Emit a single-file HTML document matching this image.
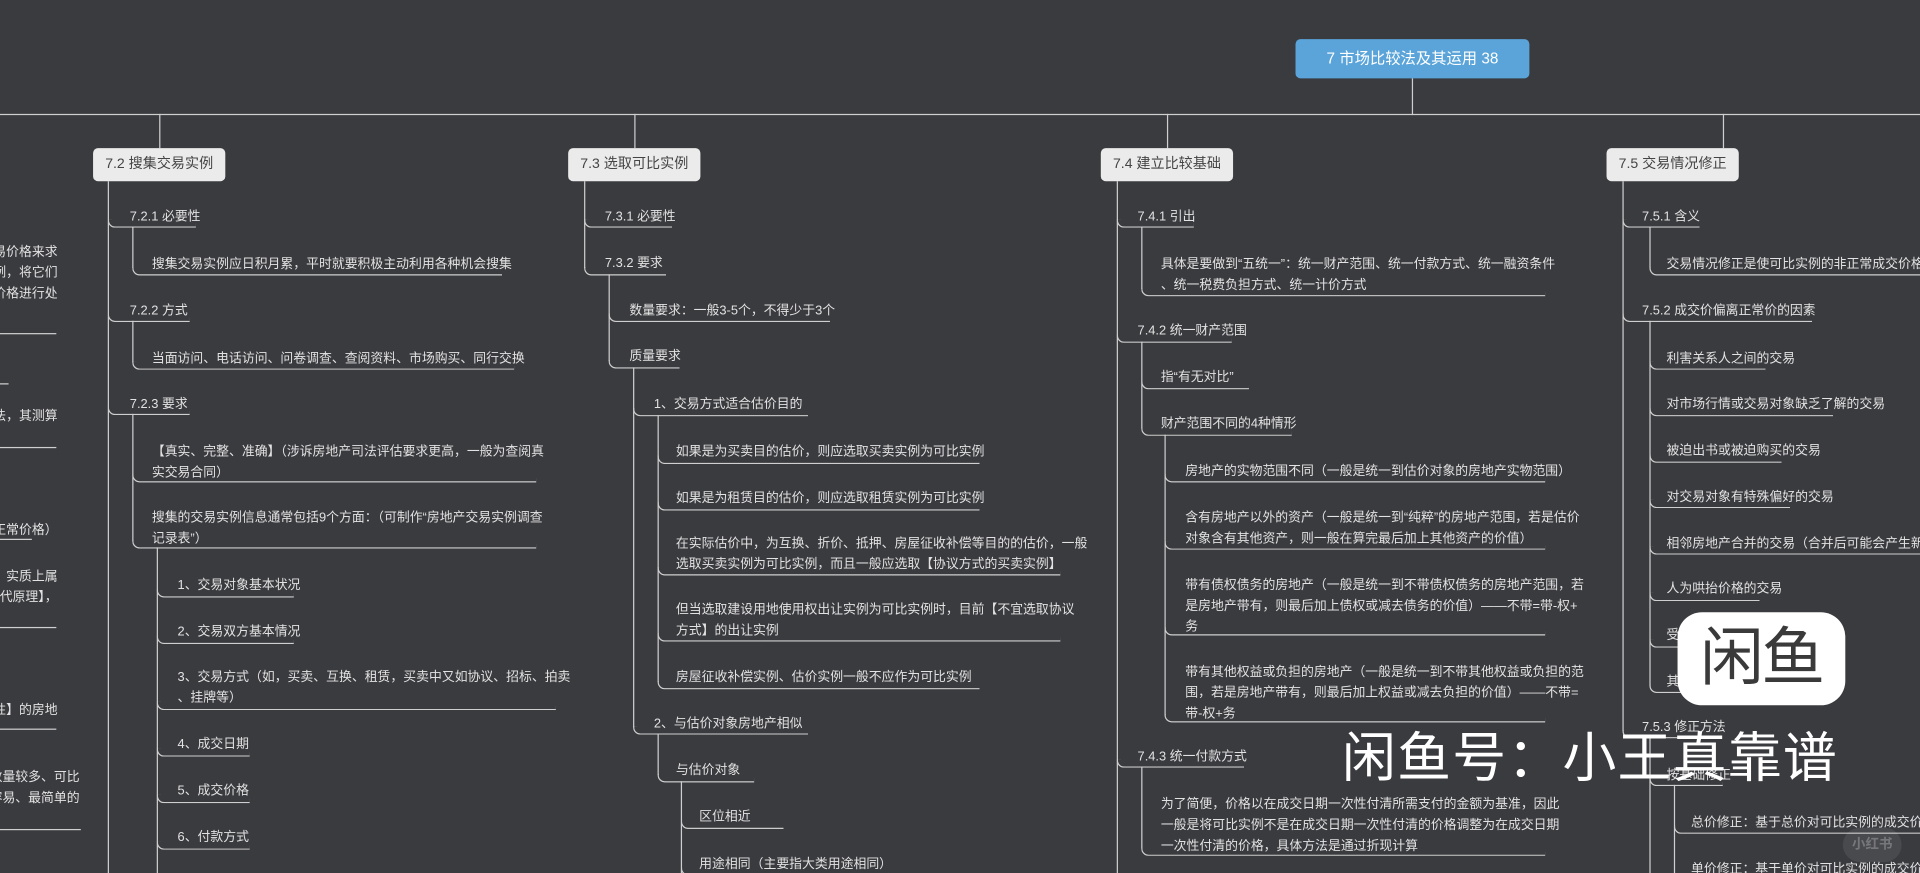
<!DOCTYPE html>
<html><head><meta charset="utf-8"><style>
html,body{margin:0;padding:0;background:#3a3b3f;overflow:hidden}
#s{position:absolute;left:0;top:0;width:1568px;height:713px;transform:scale(1.22449);transform-origin:0 0;font-family:"Liberation Sans","Noto Sans CJK SC",sans-serif;background:#3a3b3f;overflow:hidden}
.t{position:absolute;font-size:10.5px;line-height:17px;color:#e2e2e2;white-space:nowrap;margin-top:1.5px}
.u{position:absolute;height:7px;border-left:1.3px solid #cfcfcf;border-bottom:1.3px solid #cfcfcf;border-bottom-left-radius:6px;box-sizing:border-box}
.v{position:absolute;width:1.3px;background:#cfcfcf}
.h{position:absolute;height:1.3px;background:#cfcfcf}
.b{position:absolute;height:27px;line-height:27px;background:#ebebeb;border-radius:4px;color:#444;font-size:11.5px;text-align:center}
.r{position:absolute;text-align:right;width:247px;left:-200px}
</style></head><body><div id="s">
<!-- main -->
<div class="h" style="left:0;top:93px;width:1568px"></div>
<div class="b" style="left:1058px;top:32px;width:191px;height:32px;line-height:32px;background:#5aa4da;color:#fff;font-size:12.5px">7 市场比较法及其运用 38</div>
<div class="v" style="left:1153px;top:64px;height:30px"></div>
<div class="v" style="left:130px;top:93px;height:28px"></div>
<div class="v" style="left:518px;top:93px;height:28px"></div>
<div class="v" style="left:953px;top:93px;height:28px"></div>
<div class="v" style="left:1407px;top:93px;height:28px"></div>
<div class="b" style="left:76px;top:121px;width:108px">7.2 搜集交易实例</div>
<div class="b" style="left:464px;top:121px;width:108px">7.3 选取可比实例</div>
<div class="b" style="left:899px;top:121px;width:108px">7.4 建立比较基础</div>
<div class="b" style="left:1312px;top:121px;width:108px">7.5 交易情况修正</div>

<!-- left partial -->
<div class="t r" style="top:196px">交易价格来求<br>实例，将它们<br>交价格进行处</div>
<div class="h" style="left:0;top:272px;width:46px"></div>
<div class="h" style="left:0;top:313px;width:7px"></div>
<div class="t r" style="top:330px">用法，其测算</div>
<div class="h" style="left:0;top:365px;width:46px"></div>
<div class="t r" style="top:423px">正常价格）</div>
<div class="h" style="left:0;top:440px;width:26px"></div>
<div class="t r" style="top:461px">法，实质上属<br>【替代原理】，</div>
<div class="h" style="left:0;top:512px;width:46px"></div>
<div class="t r" style="top:570px">【相同性】的房地</div>
<div class="h" style="left:0;top:595px;width:46px"></div>
<div class="t" style="left:-30px;top:625px;text-align:right;width:95px">交易数量较多、可比<br>比较容易、最简单的</div>
<div class="h" style="left:0;top:677px;width:66px"></div>

<!-- 7.2 -->
<div class="v" style="left:88px;top:148px;height:565px"></div>
<div class="t" style="left:106px;top:167px">7.2.1 必要性</div><div class="u" style="left:88px;top:179px;width:72px"></div>
<div class="v" style="left:108px;top:185px;height:34px"></div>
<div class="t" style="left:124px;top:206px">搜集交易实例应日积月累，平时就要积极主动利用各种机会搜集</div><div class="u" style="left:108px;top:218px;width:302px"></div>
<div class="t" style="left:106px;top:244px">7.2.2 方式</div><div class="u" style="left:88px;top:256px;width:67px"></div>
<div class="v" style="left:108px;top:262px;height:34px"></div>
<div class="t" style="left:124px;top:283px">当面访问、电话访问、问卷调查、查阅资料、市场购买、同行交换</div><div class="u" style="left:108px;top:295px;width:312px"></div>
<div class="t" style="left:106px;top:320px">7.2.3 要求</div><div class="u" style="left:88px;top:332px;width:67px"></div>
<div class="v" style="left:108px;top:338px;height:104px"></div>
<div class="t" style="left:124px;top:359px">【真实、完整、准确】（涉诉房地产司法评估要求更高，一般为查阅真<br>实交易合同）</div><div class="u" style="left:108px;top:387px;width:330px"></div>
<div class="t" style="left:124px;top:413px">搜集的交易实例信息通常包括9个方面：（可制作“房地产交易实例调查<br>记录表”）</div><div class="u" style="left:108px;top:441px;width:330px"></div>
<div class="v" style="left:128px;top:447px;height:266px"></div>
<div class="t" style="left:145px;top:468px">1、交易对象基本状况</div><div class="u" style="left:128px;top:481px;width:112px"></div>
<div class="t" style="left:145px;top:506px">2、交易双方基本情况</div><div class="u" style="left:128px;top:519px;width:112px"></div>
<div class="t" style="left:145px;top:543px">3、交易方式（如，买卖、互换、租赁，买卖中又如协议、招标、拍卖<br>、挂牌等）</div><div class="u" style="left:128px;top:573px;width:326px"></div>
<div class="t" style="left:145px;top:598px">4、成交日期</div><div class="u" style="left:128px;top:611px;width:76px"></div>
<div class="t" style="left:145px;top:636px">5、成交价格</div><div class="u" style="left:128px;top:649px;width:76px"></div>
<div class="t" style="left:145px;top:674px">6、付款方式</div><div class="u" style="left:128px;top:687px;width:76px"></div>

<!-- 7.3 -->
<div class="v" style="left:477px;top:148px;height:71px"></div>
<div class="t" style="left:494px;top:167px">7.3.1 必要性</div><div class="u" style="left:477px;top:179px;width:72px"></div>
<div class="t" style="left:494px;top:205px">7.3.2 要求</div><div class="u" style="left:477px;top:218px;width:67px"></div>
<div class="v" style="left:497px;top:224px;height:71px"></div>
<div class="t" style="left:514px;top:244px">数量要求：一般3-5个，不得少于3个</div><div class="u" style="left:497px;top:256px;width:181px"></div>
<div class="t" style="left:514px;top:281px">质量要求</div><div class="u" style="left:497px;top:294px;width:58px"></div>
<div class="v" style="left:517px;top:300px;height:294px"></div>
<div class="t" style="left:534px;top:320px">1、交易方式适合估价目的</div><div class="u" style="left:517px;top:333px;width:143px"></div>
<div class="v" style="left:537px;top:339px;height:218px"></div>
<div class="t" style="left:552px;top:359px">如果是为买卖目的估价，则应选取买卖实例为可比实例</div><div class="u" style="left:537px;top:372px;width:263px"></div>
<div class="t" style="left:552px;top:397px">如果是为租赁目的估价，则应选取租赁实例为可比实例</div><div class="u" style="left:537px;top:410px;width:263px"></div>
<div class="t" style="left:552px;top:434px">在实际估价中，为互换、折价、抵押、房屋征收补偿等目的的估价，一般<br>选取买卖实例为可比实例，而且一般应选取【协议方式的买卖实例】</div><div class="u" style="left:537px;top:463px;width:329px"></div>
<div class="t" style="left:552px;top:488px">但当选取建设用地使用权出让实例为可比实例时，目前【不宜选取协议<br>方式】的出让实例</div><div class="u" style="left:537px;top:517px;width:329px"></div>
<div class="t" style="left:552px;top:543px">房屋征收补偿实例、估价实例一般不应作为可比实例</div><div class="u" style="left:537px;top:556px;width:263px"></div>
<div class="t" style="left:534px;top:581px">2、与估价对象房地产相似</div><div class="u" style="left:517px;top:593px;width:143px"></div>
<div class="v" style="left:537px;top:599px;height:34px"></div>
<div class="t" style="left:552px;top:619px">与估价对象</div><div class="u" style="left:537px;top:632px;width:79px"></div>
<div class="v" style="left:556px;top:638px;height:75px"></div>
<div class="t" style="left:571px;top:657px">区位相近</div><div class="u" style="left:556px;top:670px;width:84px"></div>
<div class="t" style="left:571px;top:696px">用途相同（主要指大类用途相同）</div><div class="u" style="left:556px;top:708px;width:170px"></div>

<!-- 7.4 -->
<div class="v" style="left:912px;top:148px;height:565px"></div>
<div class="t" style="left:929px;top:167px">7.4.1 引出</div><div class="u" style="left:912px;top:179px;width:63px"></div>
<div class="v" style="left:932px;top:185px;height:51px"></div>
<div class="t" style="left:948px;top:206px">具体是要做到“五统一”：统一财产范围、统一付款方式、统一融资条件<br>、统一税费负担方式、统一计价方式</div><div class="u" style="left:932px;top:235px;width:330px"></div>
<div class="t" style="left:929px;top:260px">7.4.2 统一财产范围</div><div class="u" style="left:912px;top:273px;width:94px"></div>
<div class="v" style="left:932px;top:279px;height:71px"></div>
<div class="t" style="left:948px;top:298px">指“有无对比”</div><div class="u" style="left:932px;top:311px;width:88px"></div>
<div class="t" style="left:948px;top:336px">财产范围不同的4种情形</div><div class="u" style="left:932px;top:349px;width:123px"></div>
<div class="v" style="left:951px;top:355px;height:229px"></div>
<div class="t" style="left:968px;top:375px">房地产的实物范围不同（一般是统一到估价对象的房地产实物范围）</div><div class="u" style="left:951px;top:387px;width:311px"></div>
<div class="t" style="left:968px;top:413px">含有房地产以外的资产（一般是统一到“纯粹”的房地产范围，若是估价<br>对象含有其他资产，则一般在算完最后加上其他资产的价值）</div><div class="u" style="left:951px;top:442px;width:311px"></div>
<div class="t" style="left:968px;top:468px">带有债权债务的房地产（一般是统一到不带债权债务的房地产范围，若<br>是房地产带有，则最后加上债权或减去债务的价值）——不带=带-权+<br>务</div><div class="u" style="left:951px;top:512px;width:311px"></div>
<div class="t" style="left:968px;top:539px">带有其他权益或负担的房地产（一般是统一到不带其他权益或负担的范<br>围，若是房地产带有，则最后加上权益或减去负担的价值）——不带=<br>带-权+务</div><div class="u" style="left:951px;top:583px;width:311px"></div>
<div class="t" style="left:929px;top:608px">7.4.3 统一付款方式</div><div class="u" style="left:912px;top:620px;width:104px"></div>
<div class="v" style="left:932px;top:626px;height:67px"></div>
<div class="t" style="left:948px;top:647px">为了简便，价格以在成交日期一次性付清所需支付的金额为基准，因此<br>一般是将可比实例不是在成交日期一次性付清的价格调整为在成交日期<br>一次性付清的价格，具体方法是通过折现计算</div><div class="u" style="left:932px;top:692px;width:330px"></div>

<!-- 7.5 -->
<div class="v" style="left:1325px;top:148px;height:449px"></div>
<div class="t" style="left:1341px;top:167px">7.5.1 含义</div><div class="u" style="left:1325px;top:179px;width:63px"></div>
<div class="v" style="left:1347px;top:185px;height:34px"></div>
<div class="t" style="left:1361px;top:206px">交易情况修正是使可比实例的非正常成交价格成为正常价格</div><div class="u" style="left:1347px;top:218px;width:260px"></div>
<div class="t" style="left:1341px;top:244px">7.5.2 成交价偏离正常价的因素</div><div class="u" style="left:1325px;top:256px;width:155px"></div>
<div class="v" style="left:1347px;top:262px;height:298px"></div>
<div class="t" style="left:1361px;top:283px">利害关系人之间的交易</div><div class="u" style="left:1347px;top:295px;width:95px"></div>
<div class="t" style="left:1361px;top:320px">对市场行情或交易对象缺乏了解的交易</div><div class="u" style="left:1347px;top:333px;width:150px"></div>
<div class="t" style="left:1361px;top:358px">被迫出书或被迫购买的交易</div><div class="u" style="left:1347px;top:371px;width:108px"></div>
<div class="t" style="left:1361px;top:396px">对交易对象有特殊偏好的交易</div><div class="u" style="left:1347px;top:408px;width:115px"></div>
<div class="t" style="left:1361px;top:434px">相邻房地产合并的交易（合并后可能会产生新的价值）</div><div class="u" style="left:1347px;top:446px;width:240px"></div>
<div class="t" style="left:1361px;top:471px">人为哄抬价格的交易</div><div class="u" style="left:1347px;top:484px;width:90px"></div>
<div class="t" style="left:1361px;top:509px">受债权债务关系影响的交易</div><div class="u" style="left:1347px;top:522px;width:108px"></div>
<div class="t" style="left:1361px;top:547px">其他非正常的交易情形</div><div class="u" style="left:1347px;top:559px;width:108px"></div>
<div class="t" style="left:1341px;top:584px">7.5.3 修正方法</div><div class="u" style="left:1325px;top:596px;width:80px"></div>
<div class="v" style="left:1347px;top:602px;height:111px"></div>
<div class="t" style="left:1361px;top:623px">按基础修正</div><div class="u" style="left:1347px;top:635px;width:60px"></div>
<div class="v" style="left:1367px;top:641px;height:72px"></div>
<div class="t" style="left:1381px;top:662px">总价修正：基于总价对可比实例的成交价格进行修正</div><div class="u" style="left:1367px;top:674px;width:201px"></div>
<div class="t" style="left:1381px;top:700px">单价修正：基于单价对可比实例的成交价格进行修正</div>

<!-- watermarks -->
<div style="position:absolute;left:1370px;top:500px;width:137px;height:76px;background:#fff;border-radius:20px;text-align:center;line-height:76px;font-size:52px;font-weight:normal;color:#3a3a3a;letter-spacing:-2px">闲鱼</div>
<div style="position:absolute;left:1096px;top:592px;font-size:44px;line-height:56px;color:#fff;white-space:nowrap;letter-spacing:1px">闲鱼号：小王真靠谱</div>
<div style="position:absolute;left:1505px;top:676px;width:48px;height:28px;border-radius:14px;background:rgba(255,255,255,0.08);color:rgba(255,255,255,0.25);font-size:11px;line-height:28px;text-align:center;font-weight:bold">小红书</div>
</div></body></html>
